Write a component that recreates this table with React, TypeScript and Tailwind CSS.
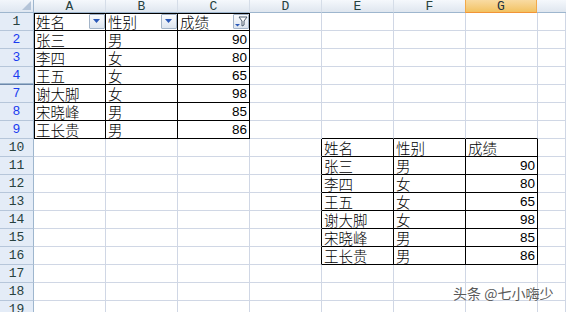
import React from 'react';

const COLS = ['A', 'B', 'C', 'D', 'E', 'F', 'G'];

const cjk = "font-['Noto_Sans_CJK_SC',sans-serif]";
const hdrFont = "font-['Liberation_Mono',monospace]";

type CellSpec = {
  text?: string;
  num?: boolean;
  rb?: boolean; // black right border
  bb?: boolean; // black bottom border
  top?: boolean; // black top line (inset)
  left?: boolean; // black left line (inset)
  filter?: 'plain' | 'funnel';
};

const people = [
  ['张三', '男', '90'],
  ['李四', '女', '80'],
  ['王五', '女', '65'],
  ['谢大脚', '女', '98'],
  ['宋晓峰', '男', '85'],
  ['王长贵', '男', '86'],
];

function buildRows() {
  const rows: { label: string; blue: boolean; cells: CellSpec[]; hiddenAfter?: boolean }[] = [];
  const labels = ['1', '2', '3', '4', '7', '8', '9'];
  labels.forEach((label, i) => {
    const cells: CellSpec[] = COLS.map(() => ({}));
    const isHead = i === 0;
    const vals = isHead ? ['姓名', '性别', '成绩'] : people[i - 1];
    for (let c = 0; c < 3; c++) {
      cells[c] = {
        text: vals[c],
        num: !isHead && c === 2,
        rb: true,
        bb: true,
        top: isHead,
        left: c === 0,
        filter: isHead ? (c === 2 ? 'funnel' : 'plain') : undefined,
      };
    }
    rows.push({ label, blue: i > 0, cells, hiddenAfter: label === '4' });
  });
  for (let r = 10; r <= 19; r++) {
    const cells: CellSpec[] = COLS.map(() => ({}));
    const idx = r - 10;
    if (idx <= 6) {
      const vals = idx === 0 ? ['姓名', '性别', '成绩'] : people[idx - 1];
      cells[3] = { rb: true };
      for (let c = 0; c < 3; c++) {
        cells[4 + c] = { text: vals[c], num: idx > 0 && c === 2, rb: true, bb: true };
      }
    }
    rows.push({ label: String(r), blue: false, cells });
  }
  // row 9 cells above the second table get a black bottom edge
  const r9 = rows[6];
  for (let c = 4; c < 7; c++) r9.cells[c] = { ...r9.cells[c], bb: true };
  return rows;
}

function FilterButton({ funnel }: { funnel?: boolean }) {
  return (
    <div className="w-[16px] h-[15px] shrink-0 border border-[#a3b4c8] rounded-[1px] bg-gradient-to-b from-[#fbfcfe] to-[#dde5ef] flex items-center justify-center">
      {funnel ? (
        <svg width="14" height="13" viewBox="0 0 14 13">
          <path d="M5 2 H13 L10 6 V10 L8 11 V6 Z" fill="#ffffff" stroke="#4a5a6c" strokeWidth="1" />
          <path d="M1 9 H6 L3.5 11.5 Z" fill="#2a58b8" />
        </svg>
      ) : (
        <svg width="8" height="5" viewBox="0 0 8 5">
          <path d="M0 0 H7 L3.5 4 Z" fill="#2a58b8" />
        </svg>
      )}
    </div>
  );
}

function Cell({ spec, last }: { spec: CellSpec; last?: boolean }) {
  const rb = spec.rb ? 'border-r-black' : 'border-r-[#d0d7e5]';
  const bb = spec.bb ? 'border-b-black' : 'border-b-[#d0d7e5]';
  let inset = '';
  if (spec.top && spec.left) inset = 'shadow-[inset_1px_1px_0_#000]';
  else if (spec.top) inset = 'shadow-[inset_0_1px_0_#000]';
  else if (spec.left) inset = 'shadow-[inset_1px_0_0_#000]';
  const width = last ? 'flex-1' : 'w-[72px] shrink-0';
  return (
    <div
      className={`${width} h-full border-r border-b ${rb} ${bb} ${inset} bg-white flex items-end ${spec.num ? 'justify-end pr-[2px]' : 'justify-between pl-[2px]'}`}
    >
      {spec.text && (
        <span
          className={`${spec.num ? "font-['Liberation_Sans',sans-serif] text-[13.5px]" : `${cjk} text-[14.5px] font-light`} leading-[16px] text-black whitespace-nowrap`}
        >
          {spec.text}
        </span>
      )}
      {spec.filter && (
        <div className="h-full flex items-center">
          <FilterButton funnel={spec.filter === 'funnel'} />
        </div>
      )}
    </div>
  );
}

export default function App() {
  const rows = buildRows();
  return (
    <div className="relative w-[566px] h-[312px] overflow-hidden bg-white">
      {/* column headers */}
      <div className="flex h-[13px]">
        <div className="relative w-[34px] shrink-0 h-full border-r border-b border-[#9eb6ce] bg-gradient-to-b from-[#f2f6fb] to-[#dfe7f1]">
          <div className="absolute right-[2px] bottom-[2px] w-0 h-0 border-l-[9px] border-l-transparent border-b-[9px] border-b-[#b4c4d8]" />
        </div>
        {COLS.map((c) =>
          c === 'G' ? (
            <div
              key={c}
              className={`w-[72px] shrink-0 h-full border-r border-l border-b border-r-[#f2a94a] border-l-[#f2a94a] border-b-[#f29436] bg-gradient-to-b from-[#f9dba2] to-[#f2c260] flex items-center justify-center ${hdrFont} text-[13px] leading-none text-[#203040] -ml-px`}
            >
              {c}
            </div>
          ) : (
            <div
              key={c}
              className={`w-[72px] shrink-0 h-full border-r border-b border-r-[#d5dde8] border-b-[#9eb6ce] bg-gradient-to-b from-[#f5f8fc] to-[#dfe6ef] flex items-center justify-center ${hdrFont} text-[13px] leading-none text-[#27413e]`}
            >
              {c}
            </div>
          ),
        )}
        <div className="flex-1 h-full border-b border-[#9eb6ce] bg-gradient-to-b from-[#f5f8fc] to-[#dfe6ef]" />
      </div>

      {rows.map((row) => (
        <div key={row.label} className="flex h-[18px]">
          <div
            className={`w-[34px] shrink-0 h-full border-r border-b border-r-[#9eb6ce] ${row.hiddenAfter ? 'border-b-[#6d88ab] shadow-[inset_0_-1px_0_#9eb6ce]' : 'border-b-[#b6c6da]'} bg-[#e4ecf7] flex items-center justify-center ${hdrFont} text-[13px] leading-none ${row.blue ? 'text-[#1a3cf0]' : 'text-[#27413e]'}`}
          >
            {row.label}
          </div>
          {row.cells.map((cell, i) => (
            <Cell key={i} spec={cell} />
          ))}
          <Cell spec={{}} last />
        </div>
      ))}

      {/* watermark */}
      <div
        className={`absolute left-[453px] top-[286px] ${cjk} text-[14px] leading-none text-[#5a5a5a] [text-shadow:0_0_2px_#fff,0_0_1px_#fff]`}
      >
        头条 @七小嗨少
      </div>
    </div>
  );
}
